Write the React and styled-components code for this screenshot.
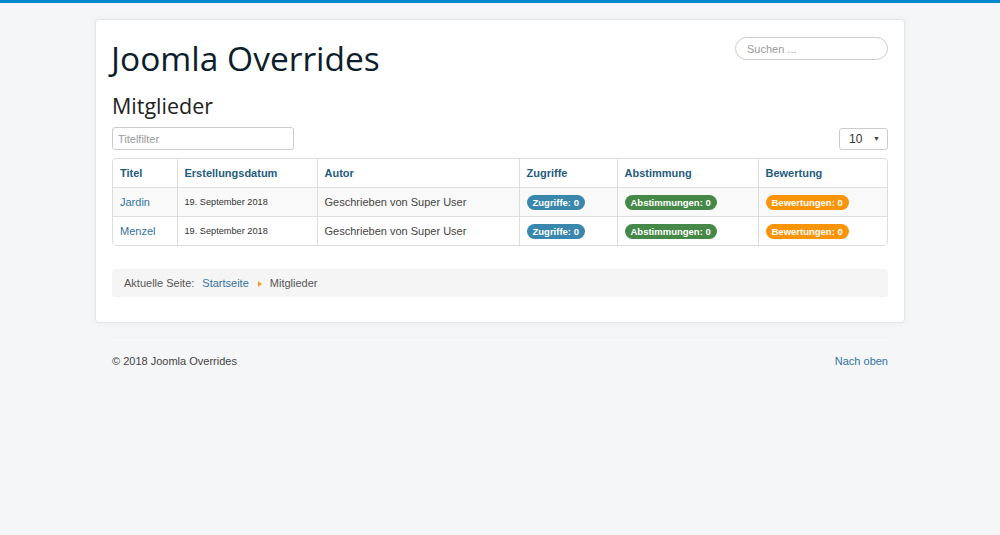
import React from 'react'
import styled, { createGlobalStyle } from 'styled-components'

const GlobalStyle = createGlobalStyle`
  html, body {
    margin: 0;
    padding: 0;
  }
  body {
    background: #f4f6f7;
    border-top: 3px solid #0088cc;
    font-family: "Liberation Sans", Arial, sans-serif;
    font-size: 11px;
    color: #333;
  }
`

const members = [
    { id: 1, name: 'Jardin', date: '19. September 2018', author: 'Geschrieben von Super User', hits: 0, votes: 0, ratings: 0 },
    { id: 2, name: 'Menzel', date: '19. September 2018', author: 'Geschrieben von Super User', hits: 0, votes: 0, ratings: 0 },
]

const columns = [
    { label: 'Titel', width: 64 },
    { label: 'Erstellungsdatum', width: 140 },
    { label: 'Autor', width: 202 },
    { label: 'Zugriffe', width: 98 },
    { label: 'Abstimmung', width: 141 },
    { label: 'Bewertung', width: 130 },
]

export default function App() {
    const spreadRows = () => members.map((m, i) =>
        <Row key={m.id} $striped={i % 2 === 0}>
            <Cell><Link href="#">{m.name}</Link></Cell>
            <Cell $small>{m.date}</Cell>
            <Cell>{m.author}</Cell>
            <Cell><Badge $color="#3a87ad">Zugriffe: {m.hits}</Badge></Cell>
            <Cell><Badge $color="#468847">Abstimmungen: {m.votes}</Badge></Cell>
            <Cell><Badge $color="#f89406">Bewertungen: {m.ratings}</Badge></Cell>
        </Row>
    )

    return (
        <>
            <GlobalStyle />
            <Page>
                <Card>
                    <Header>
                        <Brand>Joomla Overrides</Brand>
                        <SearchInput placeholder="Suchen ..." />
                    </Header>
                    <PageTitle>Mitglieder</PageTitle>
                    <FilterBar>
                        <FilterInput placeholder="Titelfilter" />
                        <LimitSelect>
                            <span>10</span>
                            <Caret>▼</Caret>
                        </LimitSelect>
                    </FilterBar>
                    <TableWrap>
                        <Table>
                            <colgroup>
                                {columns.map(c => <col key={c.label} style={{ width: c.width }} />)}
                            </colgroup>
                            <thead>
                                <tr>
                                    {columns.map(c => <HeadCell key={c.label}>{c.label}</HeadCell>)}
                                </tr>
                            </thead>
                            <tbody>
                                {spreadRows()}
                            </tbody>
                        </Table>
                    </TableWrap>
                    <Breadcrumb>
                        <Muted>Aktuelle Seite: </Muted>
                        <Link href="#">Startseite</Link>
                        <Divider />
                        <span>Mitglieder</span>
                    </Breadcrumb>
                </Card>
                <Footer>
                    <span>© 2018 Joomla Overrides</span>
                    <Link href="#">Nach oben</Link>
                </Footer>
            </Page>
        </>
    )
}

const Page = styled.div`
    width: 810px;
    margin: 16px auto 0;
`

const Card = styled.div`
    background: #fff;
    border: 1px solid #e3e5e6;
    border-radius: 4px;
    box-shadow: 0 0 6px rgba(0,0,0,0.05);
    padding: 14px 16px 25px;
`

const Header = styled.div`
    display: flex;
    justify-content: space-between;
    align-items: flex-start;
`

const Brand = styled.h1`
    margin: 0 0 0 -1px;
    font-family: "Open Sans", sans-serif;
    font-weight: 400;
    font-size: 33.5px;
    line-height: 48px;
    color: #0c1e2c;
`

const SearchInput = styled.input`
    box-sizing: border-box;
    width: 153px;
    height: 23px;
    margin-top: 3px;
    padding: 0 11px;
    border: 1px solid #ccc;
    border-radius: 12px;
    font-family: "Liberation Sans", Arial, sans-serif;
    font-size: 11px;
    &::placeholder { color: #999; }
`

const PageTitle = styled.h2`
    margin: 9px 0 0;
    font-family: "Open Sans", sans-serif;
    font-weight: 400;
    font-size: 21.5px;
    line-height: 30px;
    color: #222;
`

const FilterBar = styled.div`
    display: flex;
    justify-content: space-between;
    align-items: center;
    margin-top: 6px;
`

const FilterInput = styled.input`
    box-sizing: border-box;
    width: 182px;
    height: 23px;
    padding: 0 5px;
    border: 1px solid #ccc;
    border-radius: 3px;
    font-family: "Liberation Sans", Arial, sans-serif;
    font-size: 11px;
    &::placeholder { color: #999; }
`

const LimitSelect = styled.div`
    box-sizing: border-box;
    display: flex;
    justify-content: space-between;
    align-items: center;
    width: 49px;
    height: 22px;
    padding: 0 7px 0 9px;
    border: 1px solid #ccc;
    border-radius: 3px;
    font-size: 12px;
    color: #333;
`

const Caret = styled.span`
    font-size: 7px;
    color: #444;
`

const TableWrap = styled.div`
    margin-top: 8px;
    border: 1px solid #ddd;
    border-radius: 4px;
    overflow: hidden;
`

const Table = styled.table`
    width: 100%;
    border-collapse: collapse;
    table-layout: fixed;
`

const HeadCell = styled.th`
    height: 28px;
    padding: 0 7px;
    text-align: left;
    font-size: 11px;
    font-weight: 700;
    color: #1f5d80;
    & + & { border-left: 1px solid #ddd; }
`

const Row = styled.tr`
    background: ${p => p.$striped ? '#f9f9f9' : '#fff'};
    border-top: 1px solid #ddd;
`

const Cell = styled.td`
    height: 28px;
    padding: 0 7px;
    font-size: ${p => p.$small ? '9.2px' : '11px'};
    color: ${p => p.$small ? '#333' : '#444'};
    white-space: nowrap;
    & + & { border-left: 1px solid #ddd; }
`

const Link = styled.a`
    color: #33749f;
    text-decoration: none;
`

const Badge = styled.span`
    display: inline-block;
    padding: 2px 6px;
    border-radius: 8px;
    background: ${p => p.$color};
    color: #fff;
    font-size: 9.5px;
    font-weight: 700;
    line-height: 11px;
`

const Breadcrumb = styled.div`
    display: flex;
    align-items: center;
    height: 28px;
    margin-top: 23px;
    padding: 0 12px;
    background: #f5f5f5;
    border-radius: 4px;
    font-size: 11px;
    color: #555;
`

const Muted = styled.span`
    margin-right: 8px;
    color: #555;
`

const Divider = styled.span`
    width: 0;
    height: 0;
    margin: 1px 8px 0 9px;
    border-top: 3.5px solid transparent;
    border-bottom: 3.5px solid transparent;
    border-left: 4px solid #f0a030;
`

const Footer = styled.div`
    display: flex;
    justify-content: space-between;
    margin: 14px 17px 0;
    padding-top: 17px;
    border-top: 1px solid #eef0f1;
    font-size: 11px;
    color: #444;
`
